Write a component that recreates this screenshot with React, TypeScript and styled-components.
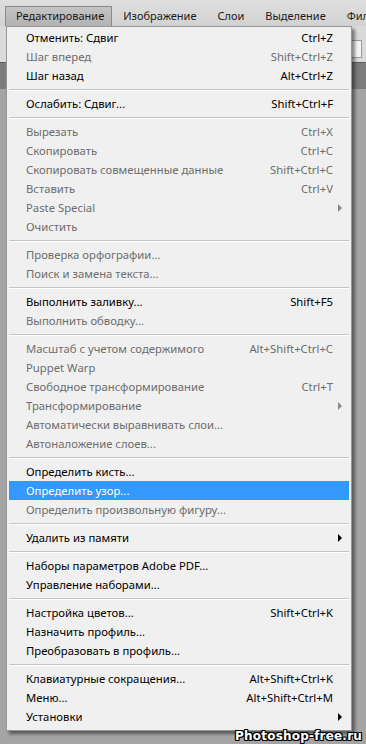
import React from 'react';
import styled, { createGlobalStyle } from 'styled-components';

const GlobalStyle = createGlobalStyle`
  html, body {
    margin: 0;
    padding: 0;
    background: #a3a3a3;
  }
  body {
    font-family: 'Noto Sans', 'Open Sans', sans-serif;
    font-size: 11.3px;
  }
`;

type Entry =
  | 'sep'
  | {
      label: string;
      shortcut?: string;
      disabled?: boolean;
      submenu?: boolean;
      active?: boolean;
    };

const entries: Entry[] = [
  { label: 'Отменить: Сдвиг', shortcut: 'Ctrl+Z' },
  { label: 'Шаг вперед', shortcut: 'Shift+Ctrl+Z', disabled: true },
  { label: 'Шаг назад', shortcut: 'Alt+Ctrl+Z' },
  'sep',
  { label: 'Ослабить: Сдвиг...', shortcut: 'Shift+Ctrl+F' },
  'sep',
  { label: 'Вырезать', shortcut: 'Ctrl+X', disabled: true },
  { label: 'Скопировать', shortcut: 'Ctrl+C', disabled: true },
  { label: 'Скопировать совмещенные данные', shortcut: 'Shift+Ctrl+C', disabled: true },
  { label: 'Вставить', shortcut: 'Ctrl+V', disabled: true },
  { label: 'Paste Special', disabled: true, submenu: true },
  { label: 'Очистить', disabled: true },
  'sep',
  { label: 'Проверка орфографии...', disabled: true },
  { label: 'Поиск и замена текста...', disabled: true },
  'sep',
  { label: 'Выполнить заливку...', shortcut: 'Shift+F5' },
  { label: 'Выполнить обводку...', disabled: true },
  'sep',
  { label: 'Масштаб с учетом содержимого', shortcut: 'Alt+Shift+Ctrl+C', disabled: true },
  { label: 'Puppet Warp', disabled: true },
  { label: 'Свободное трансформирование', shortcut: 'Ctrl+T', disabled: true },
  { label: 'Трансформирование', disabled: true, submenu: true },
  { label: 'Автоматически выравнивать слои...', disabled: true },
  { label: 'Автоналожение слоев...', disabled: true },
  'sep',
  { label: 'Определить кисть...' },
  { label: 'Определить узор...', active: true },
  { label: 'Определить произвольную фигуру...', disabled: true },
  'sep',
  { label: 'Удалить из памяти', submenu: true },
  'sep',
  { label: 'Наборы параметров Adobe PDF...' },
  { label: 'Управление наборами...' },
  'sep',
  { label: 'Настройка цветов...', shortcut: 'Shift+Ctrl+K' },
  { label: 'Назначить профиль...' },
  { label: 'Преобразовать в профиль...' },
  'sep',
  { label: 'Клавиатурные сокращения...', shortcut: 'Alt+Shift+Ctrl+K' },
  { label: 'Меню...', shortcut: 'Alt+Shift+Ctrl+M' },
  { label: 'Установки', submenu: true },
];

const topMenus = ['Редактирование', 'Изображение', 'Слои', 'Выделение', 'Фильтр'];

const Screen = styled.div`
  position: relative;
  width: 366px;
  height: 744px;
  overflow: hidden;
  display: flex;
  flex-direction: column;
  background: #a3a3a3;
`;

const MenuBar = styled.div`
  height: 26px;
  flex: none;
  display: flex;
  align-items: flex-end;
  padding-left: 5px;
  background: linear-gradient(#dedede, #d2d2d2);
  box-sizing: border-box;
  font-size: 11px;
`;

const TopItem = styled.div<{ $open?: boolean }>`
  height: 20px;
  line-height: 18px;
  padding: ${(p) => (p.$open ? '0 7px 0 10px' : '0 9px 0 9px')};
  margin-right: ${(p) => (p.$open ? '1px' : '1px')};
  color: #1a1a1a;
  white-space: nowrap;
  box-sizing: border-box;
  border: 1px solid ${(p) => (p.$open ? '#8a8a8a' : 'transparent')};
  border-bottom: none;
  background: ${(p) => (p.$open ? 'linear-gradient(#c4c4c4, #b2b2b2)' : 'transparent')};
  position: relative;
  z-index: 3;
`;

const OptionsBar = styled.div`
  height: 36px;
  flex: none;
  display: flex;
  justify-content: flex-end;
  align-items: flex-end;
  padding: 0 4px 4px 0;
  background: #dadada;
  box-sizing: border-box;
`;

const Field = styled.div`
  width: 10px;
  height: 16px;
  background: #f4f4f4;
  border: 1px solid #9a9a9a;
`;

const TabStrip = styled.div`
  height: 26px;
  flex: none;
  background: #7c7c7c;
  border-top: 1px solid #5c5c5c;
`;

const Canvas = styled.div`
  flex: 1;
  background: #a4a4a4;
`;

const Dropdown = styled.div`
  position: absolute;
  left: 6px;
  top: 26px;
  width: 346px;
  padding: 1px 2px 4px;
  box-sizing: border-box;
  background: #f0f0f0;
  border: 1px solid #979797;
  box-shadow: 3px 3px 3px rgba(0, 0, 0, 0.45);
  z-index: 2;
`;

const Row = styled.div<{ $disabled?: boolean; $active?: boolean }>`
  height: 19px;
  display: grid;
  grid-template-columns: 1fr auto 16px;
  align-items: center;
  padding-left: 17px;
  color: ${(p) => (p.$active ? '#ffffff' : p.$disabled ? '#6d6d6d' : '#000000')};
  background: ${(p) => (p.$active ? '#3399ff' : 'transparent')};
  white-space: nowrap;
`;

const Shortcut = styled.span`
  text-align: right;
`;

const Arrow = styled.span<{ $disabled?: boolean }>`
  justify-self: end;
  margin-right: 7px;
  width: 0;
  height: 0;
  border-top: 4px solid transparent;
  border-bottom: 4px solid transparent;
  border-left: 4px solid ${(p) => (p.$disabled ? '#8a8a8a' : '#000')};
`;

const Separator = styled.div`
  height: 9px;
  display: flex;
  align-items: center;
  &::after {
    content: '';
    flex: 1;
    height: 1px;
    background: #c5c5c5;
    border-bottom: 1px solid #ffffff;
  }
`;

const Watermark = styled.div`
  position: absolute;
  right: 4px;
  bottom: 1px;
  font-family: 'DejaVu Sans', Verdana, sans-serif;
  font-weight: bold;
  font-size: 12px;
  letter-spacing: 0.2px;
  color: #ffffff;
  text-shadow: 1px 0 0 #000, -1px 0 0 #000, 0 1px 0 #000, 0 -1px 0 #000, 1px 1px 0 #000,
    -1px -1px 0 #000, 1px -1px 0 #000, -1px 1px 0 #000;
  z-index: 4;
`;

const App: React.FC = () => (
  <>
    <GlobalStyle />
    <Screen>
      <MenuBar>
        {topMenus.map((m, i) => (
          <TopItem key={m} $open={i === 0}>
            {m}
          </TopItem>
        ))}
      </MenuBar>
      <OptionsBar>
        <Field />
      </OptionsBar>
      <TabStrip />
      <Canvas />
      <Dropdown>
        {entries.map((e, i) =>
          e === 'sep' ? (
            <Separator key={`sep-${i}`} />
          ) : (
            <Row key={e.label} $disabled={e.disabled} $active={e.active}>
              <span>{e.label}</span>
              <Shortcut>{e.shortcut}</Shortcut>
              {e.submenu ? <Arrow $disabled={e.disabled} /> : <span />}
            </Row>
          )
        )}
      </Dropdown>
      <Watermark>Photoshop-free.ru</Watermark>
    </Screen>
  </>
);

export default App;
